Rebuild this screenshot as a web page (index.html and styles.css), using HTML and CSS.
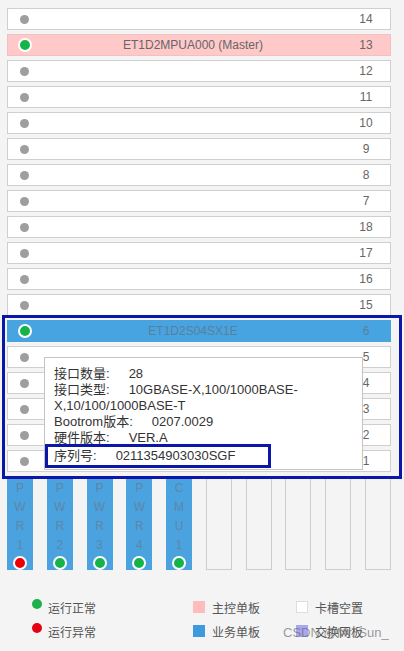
FILE: index.html
```html
<!DOCTYPE html>
<html>
    <head>
        <meta charset="utf-8">
        <meta name="viewport" content="width=device-width, initial-scale=1">
        <title>单板视图</title>
        <link rel="stylesheet" href="styles.css">
    </head>
    <body>
        <div class="rack">
            <div class="slot-list">
                <div class="slot"><span class="dot"></span><span class="name"></span><span class="num">14</span></div>
                <div class="slot master"><span class="dot big ok"></span><span class="name">ET1D2MPUA000 (Master)</span><span class="num">13</span></div>
                <div class="slot"><span class="dot"></span><span class="name"></span><span class="num">12</span></div>
                <div class="slot"><span class="dot"></span><span class="name"></span><span class="num">11</span></div>
                <div class="slot"><span class="dot"></span><span class="name"></span><span class="num">10</span></div>
                <div class="slot"><span class="dot"></span><span class="name"></span><span class="num">9</span></div>
                <div class="slot"><span class="dot"></span><span class="name"></span><span class="num">8</span></div>
                <div class="slot"><span class="dot"></span><span class="name"></span><span class="num">7</span></div>
                <div class="slot"><span class="dot"></span><span class="name"></span><span class="num">18</span></div>
                <div class="slot"><span class="dot"></span><span class="name"></span><span class="num">17</span></div>
                <div class="slot"><span class="dot"></span><span class="name"></span><span class="num">16</span></div>
                <div class="slot"><span class="dot"></span><span class="name"></span><span class="num">15</span></div>
                <div class="slot service"><span class="dot big ok"></span><span class="name">ET1D2S04SX1E</span><span class="num">6</span></div>
                <div class="slot"><span class="dot"></span><span class="name"></span><span class="num">5</span></div>
                <div class="slot"><span class="dot"></span><span class="name"></span><span class="num">4</span></div>
                <div class="slot"><span class="dot"></span><span class="name"></span><span class="num">3</span></div>
                <div class="slot"><span class="dot"></span><span class="name"></span><span class="num">2</span></div>
                <div class="slot"><span class="dot"></span><span class="name"></span><span class="num">1</span></div>
            </div>

            <div class="power-row">
                <div class="pslot used"><span>P</span><span>W</span><span>R</span><span>1</span><i class="dot big err"></i></div>
                <div class="pslot used"><span>P</span><span>W</span><span>R</span><span>2</span><i class="dot big ok"></i></div>
                <div class="pslot used"><span>P</span><span>W</span><span>R</span><span>3</span><i class="dot big ok"></i></div>
                <div class="pslot used"><span>P</span><span>W</span><span>R</span><span>4</span><i class="dot big ok"></i></div>
                <div class="pslot used"><span>C</span><span>M</span><span>U</span><span>1</span><i class="dot big ok"></i></div>
                <div class="pslot"></div>
                <div class="pslot"></div>
                <div class="pslot"></div>
                <div class="pslot"></div>
                <div class="pslot"></div>
            </div>

            <!-- hover card for slot 6 -->
            <div class="tip">
                <div><span class="k">接口数量:</span>28</div>
                <div><span class="k">接口类型:</span>10GBASE-X,100/1000BASE-<br>X,10/100/1000BASE-T</div>
                <div><span class="k">Bootrom版本:</span>0207.0029</div>
                <div><span class="k">硬件版本:</span>VER.A</div>
                <div class="mark"><span class="k">序列号:</span>0211354903030SGF</div>
            </div>
            <div class="frame"></div>
        </div>

        <div class="legend">
            <div class="item"><span class="ldot ok"></span>运行正常</div>
            <div class="item"><span class="sq pink"></span>主控单板</div>
            <div class="item"><span class="sq empty"></span>卡槽空置</div>
            <div class="item"><span class="ldot err"></span>运行异常</div>
            <div class="item"><span class="sq blue"></span>业务单板</div>
            <div class="item"><span class="sq purple"></span>交换网板</div>
        </div>

        <div class="wm">CSDN @Mr. Sun_</div>
    </body>
</html>
```

FILE: styles.css
```css
body {
    margin: 0;
    background: #f4f4f4;
    font-family: "Liberation Sans", Arial, "Noto Sans CJK SC", sans-serif;
    font-size: 12px;
    color: #666;
    height: 651px;
    position: relative;
    overflow: hidden;
}
.rack {
    position: relative;
    padding: 8px 13px 0 7px;
}
.slot-list {
    display: flex;
    flex-direction: column;
    gap: 4px;
}
.slot {
    height: 22px;
    box-sizing: border-box;
    border: 1px solid #cfcfcf;
    background: #fff;
    display: flex;
    align-items: center;
    padding-left: 12px;
}
.slot .name {
    flex: 1;
    text-align: center;
}
.slot .num {
    width: 24px;
    text-align: center;
    margin-right: 12px;
}
.slot.master {
    background: #ffc9c9;
    border-color: #f2c0c0;
}
.slot.service {
    background: #48a4e0;
    border-color: #48a4e0;
    color: #5a7f9c;
}
.dot {
    display: block;
    width: 9px;
    height: 9px;
    border-radius: 50%;
    background: #9e9e9e;
    flex: none;
}
.dot.big {
    width: 10px;
    height: 10px;
    border: 2px solid #fff;
    margin-left: -2px;
}
.dot.ok {
    background: #16b34a;
}
.dot.err {
    background: #ee0000;
}
.power-row {
    display: flex;
    justify-content: space-between;
    margin-top: 4px;
}
.pslot {
    width: 26px;
    height: 94px;
    box-sizing: border-box;
    border: 1px solid #cdcdcd;
    display: flex;
    flex-direction: column;
    align-items: center;
    padding-top: 2px;
}
.pslot.used {
    background: #4aa3de;
    border-color: #4aa3de;
    color: #5f86a6;
}
.pslot span {
    line-height: 19px;
}
.pslot .dot {
    margin: 1px 0 0 0;
}
.tip {
    position: absolute;
    left: 44px;
    top: 357px;
    width: 319px;
    height: 113px;
    box-sizing: border-box;
    background: #fff;
    border: 1px solid #c4c4c4;
    padding: 8px 0 0 9px;
    font-size: 13px;
    line-height: 16px;
    color: #333;
}
.tip .k {
    margin-right: 19px;
}
.tip .mark {
    width: 226px;
    box-sizing: border-box;
    margin: -2px 0 0 -9px;
    padding: 1px 0 1px 6px;
    border: 3px solid #0b17a8;
}
.frame {
    position: absolute;
    left: 2px;
    top: 315px;
    width: 400px;
    height: 164px;
    box-sizing: border-box;
    border: 3px solid #0b17a8;
    pointer-events: none;
}
.legend {
    display: grid;
    grid-template-columns: 161px 103px auto;
    grid-auto-rows: 24px;
    margin-top: 25px;
    padding-left: 32px;
    font-family: "Noto Sans CJK SC", sans-serif;
    color: #555;
}
.item {
    display: flex;
    align-items: center;
}
.ldot {
    width: 10px;
    height: 10px;
    border-radius: 50%;
    margin: -6px 6px 0 0;
}
.ldot.ok {
    background: #1db14b;
}
.ldot.err {
    background: #e60012;
}
.sq {
    width: 12px;
    height: 12px;
    box-sizing: border-box;
    margin-right: 7px;
}
.sq.pink {
    background: #ffbcbc;
}
.sq.blue {
    background: #3d9ade;
}
.sq.empty {
    background: #fff;
    border: 1px solid #ddd;
}
.sq.purple {
    background: #a9a7f2;
}
.wm {
    position: absolute;
    left: 283px;
    top: 625px;
    font-size: 13px;
    color: rgba(110, 110, 110, 0.7);
    pointer-events: none;
}
```
